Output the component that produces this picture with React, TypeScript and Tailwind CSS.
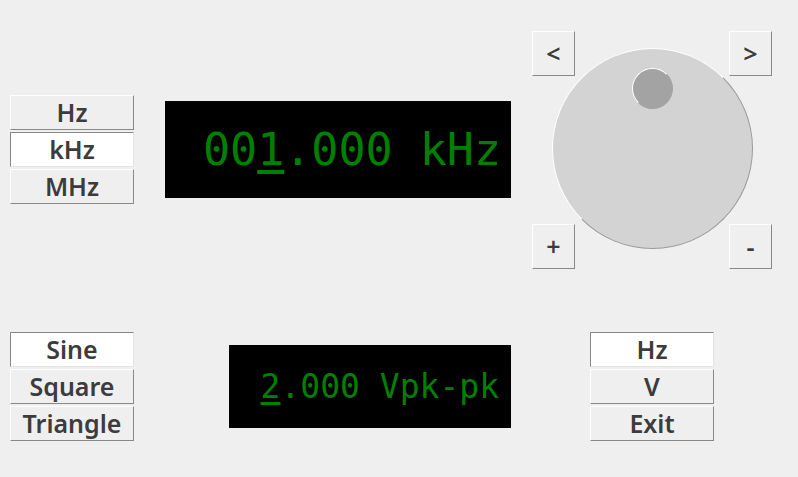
import React from "react";

const sans = { fontFamily: '"Noto Sans", "DejaVu Sans", sans-serif' };
const mono = { fontFamily: '"DejaVu Sans Mono", "Liberation Mono", monospace' };

function Btn({ label, selected = false, className = "" }: { label: string; selected?: boolean; className?: string }) {
  const base = selected
    ? "bg-white border-t-[#888888] border-l-[#888888] border-r-[#e4e4e4] border-b-[#e4e4e4]"
    : "bg-[#efefef] border-t-white border-l-white border-r-[#888888] border-b-[#888888]";
  return (
    <div
      className={`flex items-center justify-center border font-semibold text-[25px] leading-none text-[#3c3c3c] ${base} ${className}`}
      style={sans}
    >
      {label}
    </div>
  );
}

function Col({ items, sel }: { items: string[]; sel: number }) {
  return (
    <div className="flex w-[124px] flex-col gap-[2px]">
      {items.map((t, i) => (
        <Btn key={t} label={t} selected={i === sel} className="h-[35px] w-[124px]" />
      ))}
    </div>
  );
}

export default function App() {
  return (
    <div className="h-[477px] w-[798px] overflow-hidden bg-[#efefef]">
      {/* top row */}
      <div className="mt-[31px] flex h-[238px] items-start">
        <div className="ml-[10px] mt-[64px]">
          <Col items={["Hz", "kHz", "MHz"]} sel={1} />
        </div>
        <div
          className="ml-[31px] mt-[70px] flex h-[97px] w-[346px] items-center justify-end bg-black pr-[10px] text-[45px] leading-none text-[#008000]"
          style={mono}
        >
          <span className="whitespace-pre">
            00<span className="underline decoration-[4px] underline-offset-[5px]">1</span>.000 kHz
          </span>
        </div>
        <div className="ml-[21px] grid h-[238px] w-[240px]">
          <div className="col-start-1 row-start-1 mt-[17px] h-[201px] w-[201px] self-start justify-self-center rounded-full border border-t-white border-l-white border-r-[#9a9a9a] border-b-[#9a9a9a] bg-[#d3d3d3]">
            <div className="ml-[79px] mt-[19px] h-[41px] w-[41px] rounded-full border border-t-white border-l-white border-r-[#a3a3a3] border-b-[#a3a3a3] bg-[#a3a3a3]" />
          </div>
          <Btn label="<" className="col-start-1 row-start-1 h-[45px] w-[43px] self-start justify-self-start" />
          <Btn label=">" className="col-start-1 row-start-1 h-[45px] w-[43px] self-start justify-self-end" />
          <Btn label="+" className="col-start-1 row-start-1 h-[45px] w-[43px] self-end justify-self-start" />
          <Btn label="-" className="col-start-1 row-start-1 h-[45px] w-[43px] self-end justify-self-end" />
        </div>
      </div>
      {/* bottom row */}
      <div className="mt-[63px] flex items-start">
        <div className="ml-[10px]">
          <Col items={["Sine", "Square", "Triangle"]} sel={0} />
        </div>
        <div
          className="ml-[95px] mt-[13px] flex h-[83px] w-[282px] items-center justify-end bg-black pr-[12px] text-[33px] leading-none text-[#008000]"
          style={mono}
        >
          <span className="whitespace-pre">
            <span className="underline decoration-[3px] underline-offset-[4px]">2</span>.000 Vpk-pk
          </span>
        </div>
        <div className="ml-[79px]">
          <Col items={["Hz", "V", "Exit"]} sel={0} />
        </div>
      </div>
    </div>
  );
}
